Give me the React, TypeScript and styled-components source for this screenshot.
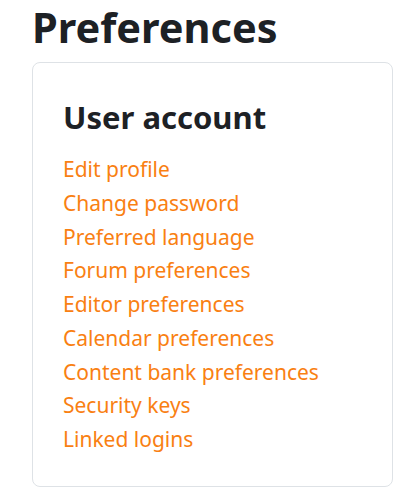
import styled, { createGlobalStyle } from 'styled-components'

const GlobalStyle = createGlobalStyle`
  html, body {
    margin: 0;
    padding: 0;
    background: #fff;
  }
  body {
    font-family: "Noto Sans", "Open Sans", sans-serif;
    color: #1d2125;
  }
`

const Page = styled.main`
  padding: 0 10px 0 32px;
`

const Title = styled.h2`
  margin: 0;
  font-size: 41.5px;
  line-height: 55px;
  font-weight: 700;
  color: #1d2125;
`

const Card = styled.section`
  margin-top: 7px;
  border: 1px solid #dee2e6;
  border-radius: 8px;
  padding: 32px 30px 29px;
`

const CardTitle = styled.h3`
  margin: 0 0 14px;
  font-size: 31px;
  line-height: 44px;
  font-weight: 700;
  color: #1d2125;
`

const LinkList = styled.ul`
  list-style: none;
  margin: 0;
  padding: 0;
`

const Item = styled.li`
  font-size: 21px;
  line-height: 33.75px;
`

const Link = styled.a`
  color: #f98012;
  text-decoration: none;
`

const links = [
  'Edit profile',
  'Change password',
  'Preferred language',
  'Forum preferences',
  'Editor preferences',
  'Calendar preferences',
  'Content bank preferences',
  'Security keys',
  'Linked logins',
]

const App = () => {
  return (
    <>
      <GlobalStyle />
      <Page>
        <Title>Preferences</Title>
        <Card>
          <CardTitle>User account</CardTitle>
          <LinkList>
            {links.map((label) => (
              <Item key={label}>
                <Link href="#">{label}</Link>
              </Item>
            ))}
          </LinkList>
        </Card>
      </Page>
    </>
  )
}

export default App
